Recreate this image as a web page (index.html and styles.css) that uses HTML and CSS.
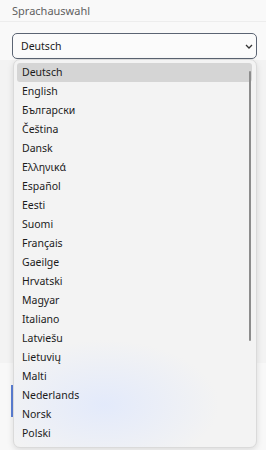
FILE: index.html
```html
<!DOCTYPE html>
<html lang="de">
<head>
    <meta charset="UTF-8">
    <meta name="viewport" content="width=device-width, initial-scale=1.0">
    <title>Sprachauswahl</title>
    <link rel="stylesheet" href="styles.css">
</head>
<body>
    <div class="page">
        <div class="section-title">Sprachauswahl</div>
        <div class="select">
            <span>Deutsch</span>
            <svg class="chevron" width="8" height="5" viewBox="0 0 8 5"><path d="M1 1 L4 4 L7 1" fill="none" stroke="#333" stroke-width="1.3"/></svg>
        </div>
        <div class="panel"></div>
        <div class="lower">
            <div class="accent"></div>
        </div>
    </div>

    <!-- open dropdown list -->
    <div class="listbox">
        <div class="option selected">Deutsch</div>
        <div class="option">English</div>
        <div class="option">Български</div>
        <div class="option">Čeština</div>
        <div class="option">Dansk</div>
        <div class="option">Ελληνικά</div>
        <div class="option">Español</div>
        <div class="option">Eesti</div>
        <div class="option">Suomi</div>
        <div class="option">Français</div>
        <div class="option">Gaeilge</div>
        <div class="option">Hrvatski</div>
        <div class="option">Magyar</div>
        <div class="option">Italiano</div>
        <div class="option">Latviešu</div>
        <div class="option">Lietuvių</div>
        <div class="option">Malti</div>
        <div class="option">Nederlands</div>
        <div class="option">Norsk</div>
        <div class="option">Polski</div>
        <div class="option">Português</div>
        <div class="scrollbar"></div>
    </div>
</body>
</html>
```

FILE: styles.css
```css
body {
    font-family: "Noto Sans", "Open Sans", sans-serif;
    background-color: #f9f9f9;
    margin: 0;
    padding: 0;
    overflow: hidden;
    height: 450px;
}

.page {
    background-color: #ececec;
    height: 450px;
}

.section-title {
    padding: 3px 0 3px 12px;
    height: 15px;
    line-height: 15px;
    font-size: 11px;
    color: #5f5f5f;
    background-color: #f9f9f9;
    border-bottom: 1px solid #ededed;
}

.select {
    padding: 11px 9px 1px 12px;
    background-color: #f9f9f9;
}

.select span {
    display: flex;
    align-items: center;
    height: 24px;
    padding-left: 8px;
    font-size: 10.5px;
    color: #1a1a1a;
    border: 1px solid #5b6473;
    border-radius: 5px;
    background-color: #fbfbfb;
}

.chevron {
    position: absolute;
    left: 245px;
    top: 44px;
}

.panel {
    height: 303px;
    background-color: #f3f3f3;
}

.lower {
    height: 88px;
    padding-top: 22px;
    background-color: #f8f8f8;
    box-sizing: border-box;
}

.accent {
    margin-left: 11px;
    width: 2px;
    height: 32px;
    background-color: #5b7fd6;
}

.listbox {
    position: absolute;
    left: 13px;
    top: 59px;
    width: 244px;
    height: 389px;
    box-sizing: border-box;
    padding: 3px 4px 0 3px;
    overflow: hidden;
    background-color: #f3f3f3;
    background-image: radial-gradient(ellipse 115px 65px at 90px 345px, #e3eafb, rgba(243, 243, 243, 0));
    border: 1px solid #dadada;
    border-radius: 7px;
    box-shadow: 0 2px 6px rgba(0, 0, 0, 0.12);
}

.option {
    height: 19px;
    line-height: 19px;
    padding-left: 5px;
    font-size: 10.5px;
    color: #1b1b1b;
    border-radius: 3px;
}

.option.selected {
    background-color: #d5d5d5;
}

.scrollbar {
    position: absolute;
    right: 5px;
    top: 11px;
    width: 2px;
    height: 270px;
    border-radius: 1px;
    background-color: #8c8c8c;
}
```
